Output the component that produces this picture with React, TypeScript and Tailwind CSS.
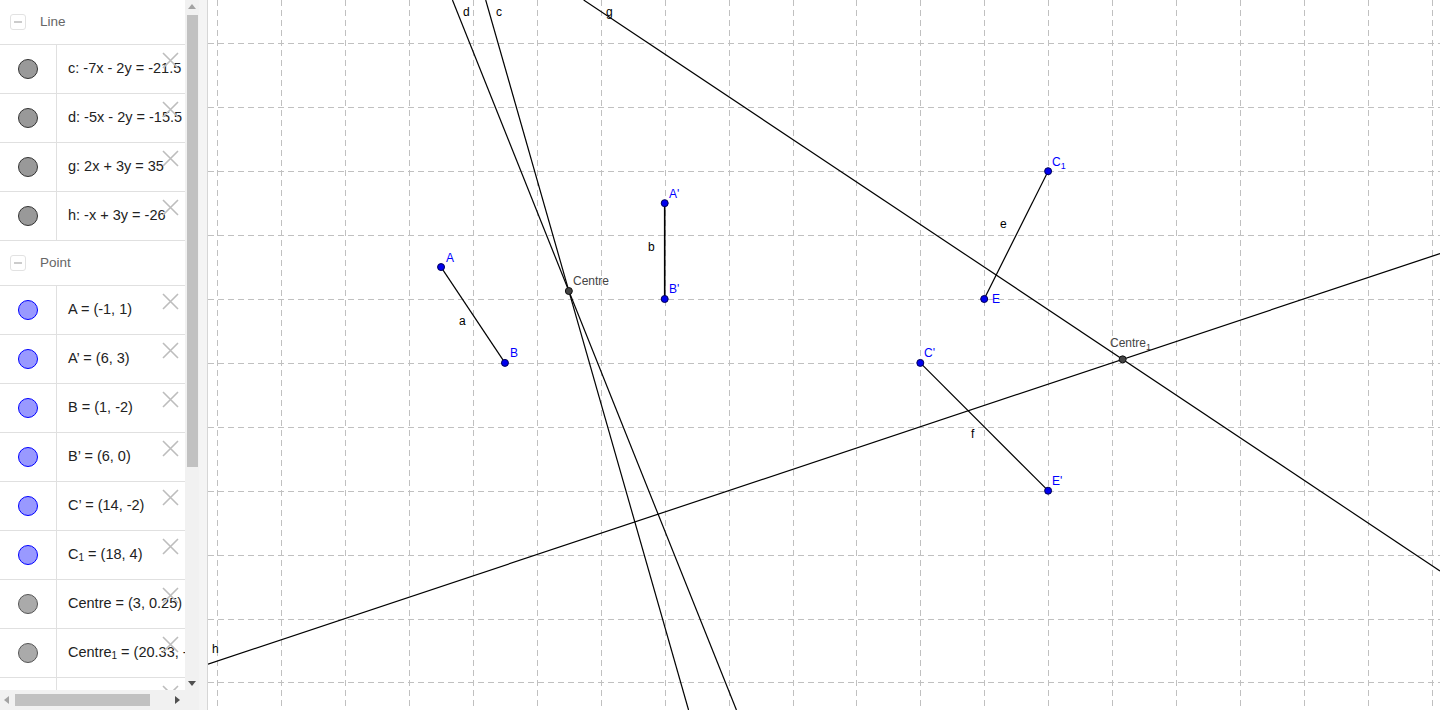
import React from 'react';

const U = 31.95;
const OX = 473;
const OY = 299;
const X = (x: number) => OX + U * x;
const Y = (y: number) => OY - U * y;
const ux = (px: number) => (px - OX) / U;
const uy = (py: number) => (OY - py) / U;

type Row = { dot: 'line' | 'point' | 'free'; text: React.ReactNode };

const lineRows: Row[] = [
  { dot: 'line', text: 'c: -7x - 2y = -21.5' },
  { dot: 'line', text: 'd: -5x - 2y = -15.5' },
  { dot: 'line', text: 'g: 2x + 3y = 35' },
  { dot: 'line', text: 'h: -x + 3y = -26' },
];

const pointRows: Row[] = [
  { dot: 'point', text: 'A = (-1, 1)' },
  { dot: 'point', text: 'A\u2019 = (6, 3)' },
  { dot: 'point', text: 'B = (1, -2)' },
  { dot: 'point', text: 'B\u2019 = (6, 0)' },
  { dot: 'point', text: 'C\u2019 = (14, -2)' },
  {
    dot: 'point',
    text: (
      <>
        C<sub className="text-[10px] relative top-[2px] align-baseline">1</sub>{' = (18, 4)'}
      </>
    ),
  },
  { dot: 'free', text: 'Centre = (3, 0.25)' },
  {
    dot: 'free',
    text: (
      <>
        Centre<sub className="text-[10px] relative top-[2px] align-baseline">1</sub>{' = (20.33, -1.89)'}
      </>
    ),
  },
  { dot: 'point', text: 'E = (16, 0)' },
];

function Dot({ kind }: { kind: Row['dot'] }) {
  if (kind === 'line')
    return <span className="block w-[20px] h-[20px] rounded-full bg-[#999999] border border-[#333333]" />;
  if (kind === 'point')
    return <span className="block w-[20px] h-[20px] rounded-full bg-[#9999ff] border border-[#0000ff]" />;
  return <span className="block w-[20px] h-[20px] rounded-full bg-[#aaaaaa] border border-[#555555]" />;
}

function Cross() {
  return (
    <svg className="absolute right-[6px] top-[7px]" width="17" height="17" viewBox="0 0 17 17">
      <path d="M1 1 L16 16 M16 1 L1 16" stroke="#bdbdbd" strokeWidth="1.6" fill="none" />
    </svg>
  );
}

function ItemRow({ row }: { row: Row }) {
  return (
    <div className="relative flex h-[49px] shrink-0 border-b border-[#e0e0e0]">
      <div className="w-[57px] shrink-0 flex items-center justify-center border-r border-[#e0e0e0]">
        <Dot kind={row.dot} />
      </div>
      <div className="flex items-center pl-[11px] whitespace-nowrap text-[14.5px] text-[#222222]">
        <span>{row.text}</span>
      </div>
      <Cross />
    </div>
  );
}

function Header({ title }: { title: string }) {
  return (
    <div className="flex items-center shrink-0 h-[45px] border-b border-[#e0e0e0]">
      <div className="ml-[10px] w-[16px] h-[16px] rounded-[3px] border border-[#e2e2e2] flex items-center justify-center">
        <span className="block w-[8px] h-[2px] bg-[#cccccc]" />
      </div>
      <span className="ml-[14px] text-[13.5px] text-[#666666]">{title}</span>
    </div>
  );
}

function AlgebraView() {
  return (
    <div className="w-[199px] h-full flex flex-col shrink-0 bg-white">
      <div className="flex flex-1 min-h-0">
        <div className="w-[185px] overflow-hidden flex flex-col">
          <Header title="Line" />
          {lineRows.map((r, i) => (
            <ItemRow key={'l' + i} row={r} />
          ))}
          <Header title="Point" />
          {pointRows.map((r, i) => (
            <ItemRow key={'p' + i} row={r} />
          ))}
        </div>
        <div className="w-[14px] bg-[#f1f1f1] flex flex-col items-center">
          <span className="mt-[4px] w-0 h-0 border-l-[4px] border-r-[4px] border-b-[5px] border-l-transparent border-r-transparent border-b-[#a3a3a3]" />
          <div className="mt-[6px] w-[11px] h-[452px] bg-[#c1c1c1]" />
          <div className="flex-1" />
          <span className="mb-[4px] w-0 h-0 border-l-[4px] border-r-[4px] border-t-[5px] border-l-transparent border-r-transparent border-t-[#505050]" />
        </div>
      </div>
      <div className="h-[20px] flex shrink-0">
        <div className="w-[185px] bg-[#f1f1f1] flex items-center">
          <span className="ml-[4px] w-0 h-0 border-t-[4px] border-b-[4px] border-r-[5px] border-t-transparent border-b-transparent border-r-[#a3a3a3]" />
          <div className="ml-[6px] w-[135px] h-[12px] bg-[#c1c1c1]" />
          <div className="flex-1" />
          <span className="mr-[5px] w-0 h-0 border-t-[4px] border-b-[4px] border-l-[5px] border-t-transparent border-b-transparent border-l-[#505050]" />
        </div>
        <div className="w-[14px] bg-[#f1f1f1]" />
      </div>
    </div>
  );
}

function Label({
  x,
  y,
  children,
  color = '#000000',
  sub,
}: {
  x: number;
  y: number;
  children: React.ReactNode;
  color?: string;
  sub?: string;
}) {
  return (
    <text x={x} y={y} fill={color} fontSize="12" fontFamily="'Liberation Sans', Arial, sans-serif">
      {children}
      {sub && (
        <tspan fontSize="9" dy="3">
          {sub}
        </tspan>
      )}
    </text>
  );
}

function GraphicsView() {
  const left = 208;
  const right = 1440;

  const vGrid: number[] = [];
  for (let k = -10; k <= 40; k += 2) {
    const px = X(k);
    if (px > left && px < right) vGrid.push(px);
  }
  const hGrid: number[] = [];
  for (let k = -20; k <= 20; k += 2) {
    const py = Y(k);
    if (py > 0 && py < 710) hGrid.push(py);
  }

  // c: -7x - 2y = -21.5
  const cx = (py: number) => X((21.5 - 2 * uy(py)) / 7);
  // d: -5x - 2y = -15.5
  const dx = (py: number) => X((15.5 - 2 * uy(py)) / 5);
  // g: 2x + 3y = 35
  const gy = (px: number) => Y((35 - 2 * ux(px)) / 3);
  const gx = (py: number) => X((35 - 3 * uy(py)) / 2);
  // h: -x + 3y = -26
  const hy = (px: number) => Y((ux(px) - 26) / 3);

  const pts = {
    A: [X(-1), Y(1)],
    B: [X(1), Y(-2)],
    A1: [X(6), Y(3)],
    B1: [X(6), Y(0)],
    C1: [X(18), Y(4)],
    E: [X(16), Y(0)],
    Cp: [X(14), Y(-2)],
    Ep: [X(18), Y(-6)],
  };
  const centre = [X(3), Y(0.25)];
  const centre1 = [X(61 / 3), Y((35 - 122 / 3) / 3)];

  return (
    <div className="flex-1 h-full relative bg-white overflow-hidden">
      <svg width="1232" height="710" viewBox="208 0 1232 710" className="block">
        <g stroke="#c0c0c0" strokeWidth="1" strokeDasharray="6 4" fill="none">
          {vGrid.map((x) => (
            <line key={'v' + x} x1={Math.round(x) + 0.5} y1={0} x2={Math.round(x) + 0.5} y2={710} />
          ))}
          {hGrid.map((y) => (
            <line key={'h' + y} x1={208} y1={Math.round(y) + 0.5} x2={1440} y2={Math.round(y) + 0.5} />
          ))}
        </g>
        <g stroke="#000000" strokeWidth="1.2" fill="none">
          <line x1={cx(0)} y1={0} x2={cx(710)} y2={710} />
          <line x1={dx(0)} y1={0} x2={dx(710)} y2={710} />
          <line x1={gx(0)} y1={0} x2={1440} y2={gy(1440)} />
          <line x1={208} y1={hy(208)} x2={1440} y2={hy(1440)} />
          <line x1={pts.A[0]} y1={pts.A[1]} x2={pts.B[0]} y2={pts.B[1]} />
          <line x1={pts.A1[0]} y1={pts.A1[1]} x2={pts.B1[0]} y2={pts.B1[1]} strokeWidth="1.6" />
          <line x1={pts.E[0]} y1={pts.E[1]} x2={pts.C1[0]} y2={pts.C1[1]} />
          <line x1={pts.Cp[0]} y1={pts.Cp[1]} x2={pts.Ep[0]} y2={pts.Ep[1]} />
        </g>
        <g fill="#0000ee" stroke="#000055" strokeWidth="1">
          {Object.entries(pts).map(([k, p]) => (
            <circle key={k} cx={p[0]} cy={p[1]} r="3.5" />
          ))}
        </g>
        <g fill="#444444" stroke="#111111" strokeWidth="1">
          <circle cx={centre[0]} cy={centre[1]} r="3.5" />
          <circle cx={centre1[0]} cy={centre1[1]} r="3.5" />
        </g>
        <Label x={463} y={16}>d</Label>
        <Label x={496} y={16}>c</Label>
        <Label x={606} y={16}>g</Label>
        <Label x={459} y={325}>a</Label>
        <Label x={648} y={251}>b</Label>
        <Label x={1000} y={228}>e</Label>
        <Label x={971} y={438}>f</Label>
        <Label x={212} y={653}>h</Label>
        <Label x={573} y={285} color="#444444">Centre</Label>
        <Label x={1110} y={347} color="#444444" sub="1">Centre</Label>
        <Label x={446} y={262} color="#0000ff">A</Label>
        <Label x={510} y={357} color="#0000ff">B</Label>
        <Label x={669} y={198} color="#0000ff">A'</Label>
        <Label x={669} y={293} color="#0000ff">B'</Label>
        <Label x={1052} y={166} color="#0000ff" sub="1">C</Label>
        <Label x={992} y={303} color="#0000ff">E</Label>
        <Label x={924} y={357} color="#0000ff">C'</Label>
        <Label x={1052} y={485} color="#0000ff">E'</Label>
      </svg>
    </div>
  );
}

export default function App() {
  return (
    <div className="w-[1440px] h-[710px] flex overflow-hidden bg-white font-['Liberation_Sans',Arial,sans-serif]">
      <AlgebraView />
      <div className="w-[9px] h-full shrink-0 bg-[#f4f4f4] border-r border-[#d6d6d6]" />
      <GraphicsView />
    </div>
  );
}
